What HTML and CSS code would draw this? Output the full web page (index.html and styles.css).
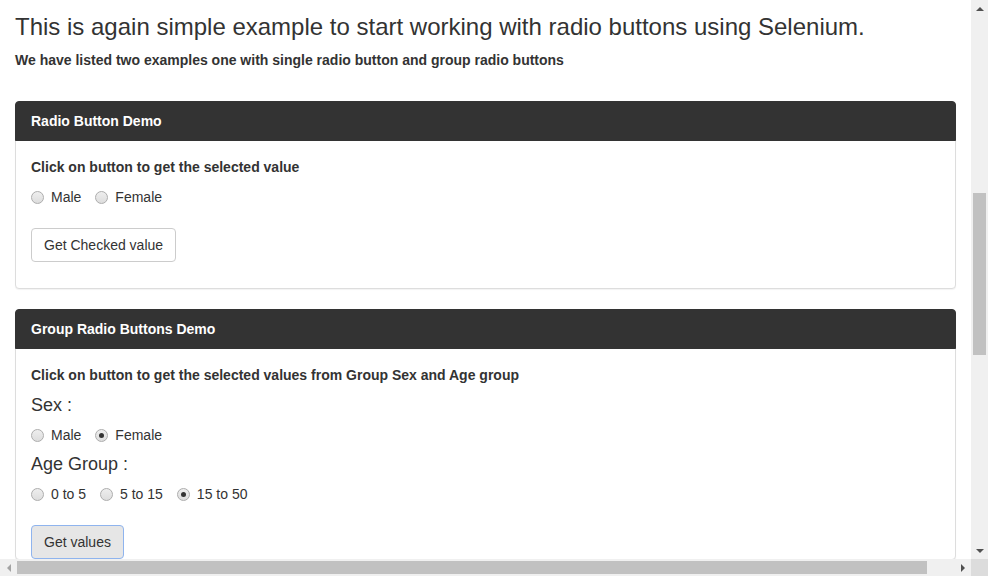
FILE: index.html
```html
<!DOCTYPE html>
<html lang="en">
<head>
<meta charset="utf-8">
<title>Radio Button Demo</title>
<link rel="stylesheet" href="styles.css">
</head>
<body>
<div class="viewport">
  <div class="container">
    <h3 class="title">This is again simple example to start working with radio buttons using Selenium.</h3>
    <h5 class="subtitle">We have listed two examples one with single radio button and group radio buttons</h5>

    <div class="panel">
      <div class="panel-heading">Radio Button Demo</div>
      <div class="panel-body">
        <p class="desc">Click on button to get the selected value</p>
        <div class="radios">
          <label class="opt"><span class="radio"></span>Male</label>
          <label class="opt"><span class="radio"></span>Female</label>
        </div>
        <button class="btn">Get Checked value</button>
        <p class="result"></p>
      </div>
    </div>

    <div class="panel">
      <div class="panel-heading">Group Radio Buttons Demo</div>
      <div class="panel-body">
        <p class="desc">Click on button to get the selected values from Group Sex and Age group</p>
        <h4 class="group-label">Sex :</h4>
        <div class="radios">
          <label class="opt"><span class="radio"></span>Male</label>
          <label class="opt"><span class="radio checked"></span>Female</label>
        </div>
        <h4 class="group-label">Age Group :</h4>
        <div class="radios">
          <label class="opt"><span class="radio"></span>0 to 5</label>
          <label class="opt"><span class="radio"></span>5 to 15</label>
          <label class="opt"><span class="radio checked"></span>15 to 50</label>
        </div>
        <button class="btn btn-focus">Get values</button>
      </div>
    </div>
  </div>
</div>

<div class="vscroll">
  <div class="arrow"><span class="tri tri-up"></span></div>
  <div class="vtrack"><div class="vthumb"></div></div>
  <div class="arrow"><span class="tri tri-down"></span></div>
</div>

<div class="hscroll">
  <div class="arrow"><span class="tri tri-left"></span></div>
  <div class="htrack"><div class="hthumb"></div></div>
  <div class="arrow"><span class="tri tri-right"></span></div>
</div>
<div class="corner"></div>
</body>
</html>
```

FILE: styles.css
```css
* { box-sizing: border-box; }

html, body {
  margin: 0;
  padding: 0;
  background: #fff;
}

body {
  width: 988px;
  height: 576px;
  overflow: hidden;
  display: grid;
  grid-template-columns: 971px 17px;
  grid-template-rows: 559px 17px;
  font-family: "Liberation Sans", Arial, Helvetica, sans-serif;
  font-size: 14px;
  line-height: 20px;
  color: #333;
}

.viewport {
  overflow: hidden;
  background: #fff;
}

.container {
  padding: 14px 15px 0;
}

.title {
  margin: 0;
  font-size: 24px;
  line-height: 26px;
  font-weight: 400;
  color: #333;
}

.subtitle {
  margin: 10px 0 0;
  font-size: 14px;
  line-height: 20px;
  font-weight: 700;
  color: #333;
}

.panel {
  margin-top: 31px;
  border: 1px solid #ddd;
  border-radius: 4px;
  box-shadow: 0 1px 1px rgba(0, 0, 0, .05);
  background: #fff;
}

.panel + .panel {
  margin-top: 20px;
}

.panel-heading {
  margin: -1px -1px 0;
  padding: 9px 15px 10px;
  height: 40px;
  background: #333;
  border: 1px solid #333;
  border-radius: 4px 4px 0 0;
  color: #fff;
  font-weight: 700;
  line-height: 20px;
}

.panel-body {
  padding: 16px 15px 0;
}

.desc {
  margin: 0 0 10px;
  font-weight: 700;
}

.group-label {
  margin: 0 0 10px;
  font-size: 18px;
  line-height: 20px;
  font-weight: 400;
}

.radios {
  margin: 2px 0 9px;
  display: flex;
  height: 20px;
  align-items: center;
}

.opt {
  display: inline-flex;
  align-items: center;
  gap: 7px;
  margin-right: 14px;
}

.radio {
  width: 13px;
  height: 13px;
  border-radius: 50%;
  border: 1px solid #adadad;
  background: linear-gradient(#eeeeee, #dddddd);
  display: inline-flex;
  align-items: center;
  justify-content: center;
  flex: none;
}

.radio.checked::after {
  content: "";
  width: 5px;
  height: 5px;
  border-radius: 50%;
  background: #333;
}

.btn {
  display: block;
  margin-top: 21px;
  padding: 6px 12px;
  height: 34px;
  font-family: inherit;
  font-size: 14px;
  line-height: 20px;
  color: #333;
  background: #fff;
  border: 1px solid #ccc;
  border-radius: 4px;
}

.btn-focus {
  background: #e6e6e6;
  border-color: #8fb4ee;
}

.result {
  margin: 0;
  height: 26px;
}

/* fake scrollbars */
.vscroll {
  background: #f0f0f0;
  display: flex;
  flex-direction: column;
}

.hscroll {
  background: #f0f0f0;
  display: flex;
}

.corner {
  background: #dcdcdc;
}

.arrow {
  width: 17px;
  height: 17px;
  flex: none;
  display: flex;
  align-items: center;
  justify-content: center;
}

.vtrack {
  flex: 1;
  padding: 176px 2px 0;
}

.vthumb {
  height: 162px;
  background: #c1c1c1;
}

.htrack {
  flex: 1;
  padding: 2px 0;
}

.hthumb {
  width: 910px;
  height: 13px;
  background: #c1c1c1;
}

.tri {
  width: 0;
  height: 0;
  border: 4px solid transparent;
}

.tri-up { border-bottom-color: #505050; border-top-width: 0; }
.tri-down { border-top-color: #505050; border-bottom-width: 0; }
.tri-left { border-right-color: #a3a3a3; border-left-width: 0; }
.tri-right { border-left-color: #505050; border-right-width: 0; }
```
